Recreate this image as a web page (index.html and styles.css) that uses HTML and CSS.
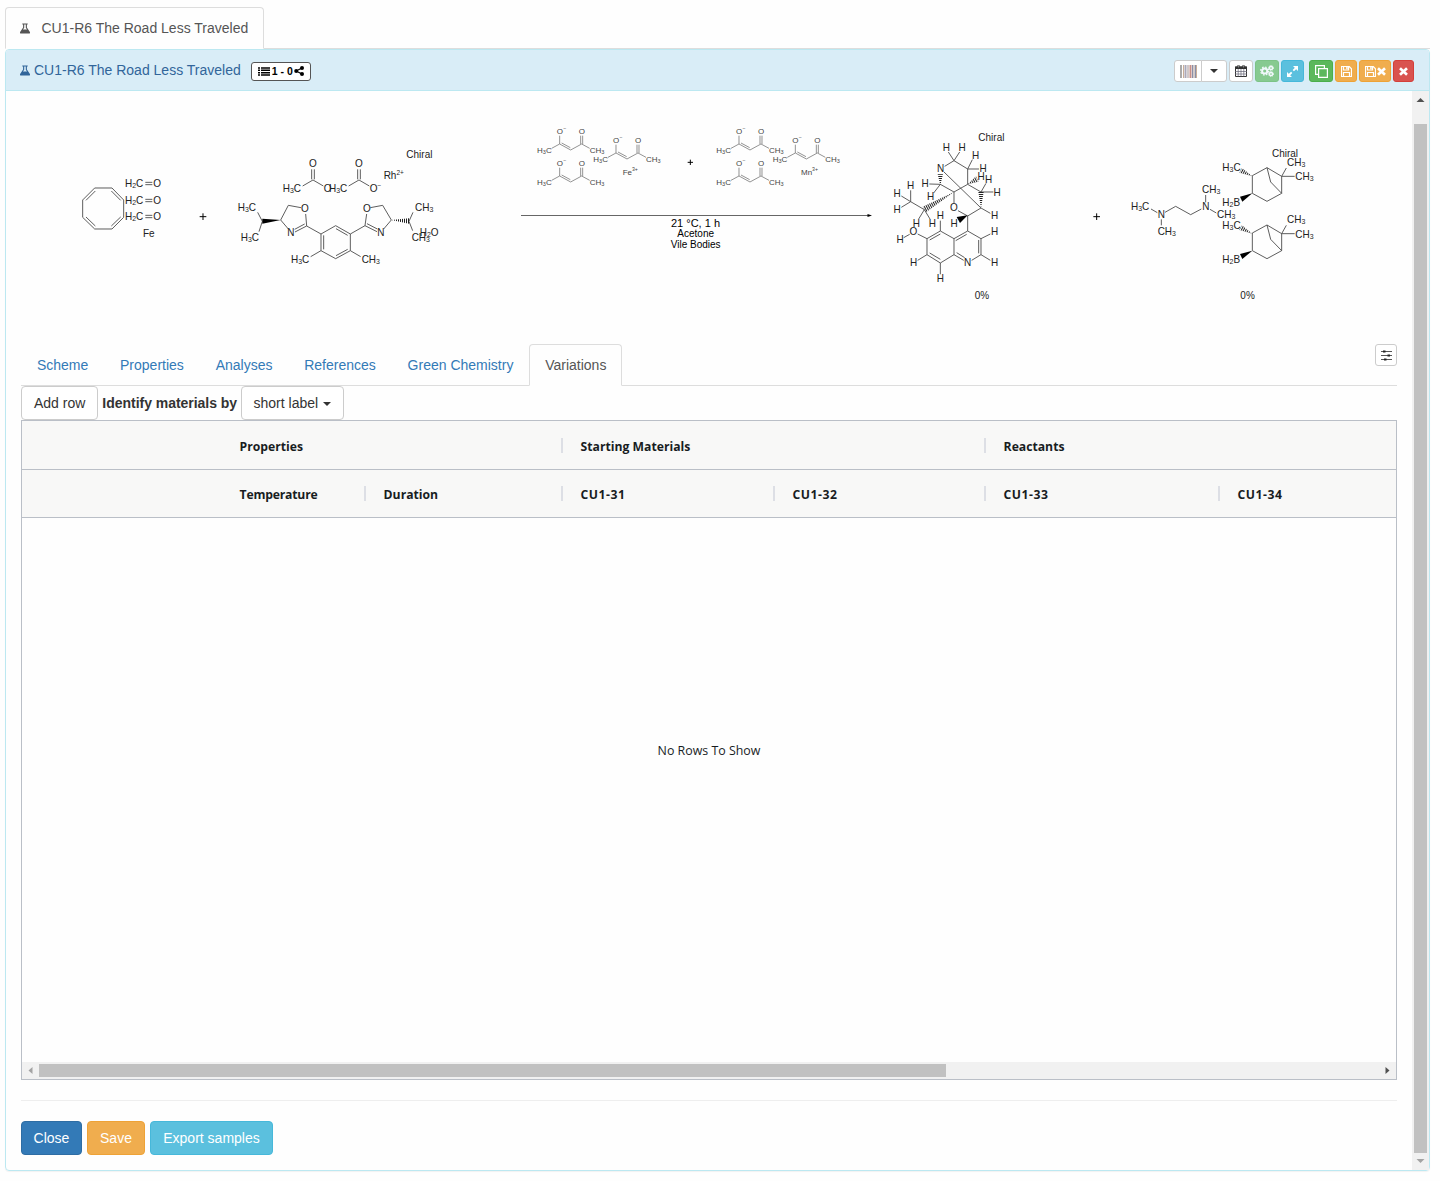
FILE: index.html
```html
<!DOCTYPE html>
<html lang="en">
<head>
<meta charset="utf-8">
<title>CU1-R6 The Road Less Traveled</title>
<link rel="stylesheet" href="styles.css">
</head>
<body>
<svg class="defs" width="0" height="0" aria-hidden="true">
  <defs>
    <symbol id="flask" viewBox="0 0 10 11"><path d="M2.300.500h5.400v1H6.900v3L9.900 9q.5 1.500-.9 1.500H1Q-.4 10.500.1 9L3.100 4.500v-3h-.8zM4.200 1.500v3.300L3 6.500h4L5.800 4.800V1.500z" fill="currentColor" fill-rule="evenodd"/></symbol>
    <symbol id="floppy" viewBox="0 0 11 11"><path d="M.5.500h7.700l2.300 2.300v7.700H.500zM2.500.500v3.500h5V.500M2.500 10.500V6.500h6v4" fill="none" stroke="#fff" stroke-width="1.200"/><path d="M5.200.700h1.500v2.500H5.200z" fill="#fff"/></symbol>
    <symbol id="cross" viewBox="0 0 9 9"><path d="M1 1.300l7 6.400M8 1.300L1 7.700" stroke="#fff" stroke-width="2.700"/></symbol>
    <pattern id="hashV" width="6" height="6" patternUnits="userSpaceOnUse"><path d="M1.500 0v6" stroke="#222" stroke-width="3"/></pattern>
    <pattern id="hashH" width="6" height="6" patternUnits="userSpaceOnUse"><path d="M0 1.500h6" stroke="#222" stroke-width="3"/></pattern>
    <pattern id="hashA" width="6" height="6" patternUnits="userSpaceOnUse" patternTransform="rotate(-28)"><path d="M1.500 0v6" stroke="#222" stroke-width="3"/></pattern>
    <pattern id="hashB" width="6" height="6" patternUnits="userSpaceOnUse" patternTransform="rotate(28)"><path d="M1.500 0v6" stroke="#222" stroke-width="3"/></pattern>
    <g id="acac">
      <path d="M134 62V87L110 100M134 87l33 18 33-18 24 13M140 84l26 14M197 62v25M203 62v25"/>
      <text x="125" y="57">O<tspan class="sup">−</tspan></text><text x="191" y="57">O</text>
      <text x="66" y="115">H<tspan class="sub">3</tspan>C</text><text x="224" y="115">CH<tspan class="sub">3</tspan></text>
    </g>
    <g id="borane">
      <path d="M517 137l44-24 44 26v51l-44 24-44-24zM561 113l11 43 33 34M605 139l14-25M605 139h39"/>
      <path class="solid" d="M517 190l-37 10 7 15z"/><path class="hash" d="M517 139l-31-25-8 14z" fill="url(#hashB)"/>
      <text x="427" y="124">H<tspan class="sub">3</tspan>C</text><text x="621" y="107">CH<tspan class="sub">3</tspan></text>
      <text x="646" y="151">CH<tspan class="sub">3</tspan></text><text x="427" y="227">H<tspan class="sub">2</tspan>B</text>
    </g>
  </defs>
</svg>

<ul class="tabs top-tabs"><li class="tab active"><svg class="flask" width="10" height="11"><use href="#flask"/></svg>CU1-R6 The Road Less Traveled</li></ul>

<section class="panel">
  <header class="panel-header">
    <svg class="flask" width="10" height="11"><use href="#flask"/></svg>
    <span class="title">CU1-R6 The Road Less Traveled</span>
    <span class="badge">
      <svg width="12" height="9" viewBox="0 0 12 9"><path d="M0 .9h2M0 3.300h2M0 5.700h2M0 8.100h2M3 .9h9M3 3.300h9M3 5.700h9M3 8.100h9" stroke="#000" stroke-width="1.500"/></svg>
      <span>1 - 0</span>
      <svg width="10" height="10" viewBox="0 0 10 10"><path d="M8 2L2.200 5 8 8" fill="none" stroke="#000" stroke-width="1.300"/><circle cx="8" cy="2" r="2"/><circle cx="2.200" cy="5" r="2"/><circle cx="8" cy="8" r="2"/></svg>
    </span>
    <div class="tools">
      <div class="split">
        <button class="tool barcode" aria-label="Barcode"><svg width="17" height="13" viewBox="0 0 17 13"><path d="M1 0v13" stroke="#aaa" stroke-width="2"/><path d="M3.500 0v13M16.500 0v13" stroke="#c9ae98"/><path d="M5.500 0v13" stroke="#aba8b8" stroke-width="2"/><path d="M8 0v13M14 0v13" stroke="#a29494"/><path d="M10.500 0v13" stroke="#c58f88" stroke-width="2"/><path d="M12.500 0v13M15.500 0v13" stroke="#898fa8"/></svg></button>
        <button class="tool drop" aria-label="More"><span class="caret"></span></button>
      </div>
      <button class="tool w24" aria-label="Calendar"><svg width="12" height="12" viewBox="0 0 12 12"><path d="M.5 2h11v9.500H.500z" fill="#fff" stroke="#333"/><path d="M0 1.500h12v2.500H0z" fill="#333"/><path d="M3.500 0v3M8.500 0v3" stroke="#333" stroke-width="2"/><path d="M3.500 0v2.500M8.500 0v2.500" stroke="#aaa" stroke-width=".7"/><path d="M3.200 4v7.500M6 4v7.500M8.800 4v7.500M0 6.500h12M0 9h12" stroke="#667" stroke-width=".7"/></svg></button>
      <button class="tool w24 green faded" aria-label="Process"><svg width="14" height="12" viewBox="0 0 14 12"><g fill="none" stroke="#fff"><circle cx="4.700" cy="6" r="2.600" stroke-width="2"/><circle cx="4.700" cy="6" r="4" stroke-width="1.300" stroke-dasharray="1.600 1.540"/><circle cx="11" cy="3" r="1.600" stroke-width="1.500"/><circle cx="11" cy="9" r="1.600" stroke-width="1.500"/><circle cx="11" cy="3" r="2.500" stroke-dasharray="1 1"/><circle cx="11" cy="9" r="2.500" stroke-dasharray="1 1"/></g></svg></button>
      <button class="tool w23 cyan" aria-label="Expand"><svg width="11" height="11" viewBox="0 0 11 11"><path d="M2 9l2.700-2.700M6.300 4.700L9 2" stroke="#fff" stroke-width="1.800"/><path d="M6 0h5v5zM0 6v5h5z" fill="#fff"/></svg></button>
      <button class="tool w24 green copy" aria-label="Copy"><svg width="13" height="13" viewBox="0 0 13 13"><path d="M3.600 3.600h8.800v8.800H3.600zM3 9.400H.600V.600h8.800V3" fill="none" stroke="#fff" stroke-width="1.200"/></svg></button>
      <button class="tool w22 orange" aria-label="Save"><svg width="11" height="11"><use href="#floppy"/></svg></button>
      <button class="tool w32 orange" aria-label="Save and close"><svg width="11" height="11"><use href="#floppy"/></svg><svg width="9" height="9"><use href="#cross"/></svg></button>
      <button class="tool w21 red" aria-label="Close"><svg width="9" height="9"><use href="#cross"/></svg></button>
    </div>
  </header>

  <div class="panel-main">
    <div class="content">
      <svg class="scheme" width="1376" height="238" viewBox="21 91 1376 238">
        <g transform="translate(70 140) scale(.33333)">
          <path d="M38 180l36-36h52l35 36v52l-35 35H74l-36-35zM48 181l28-28M124 153l28 28M48 231l28 27M124 258l28-27M226 127h21M226 134h21M226 178h21M226 185h21M226 226h21M226 233h21"/>
          <text x="165" y="142">H<tspan class="sub">2</tspan>C</text><text x="250" y="142">O</text>
          <text x="165" y="193">H<tspan class="sub">2</tspan>C</text><text x="250" y="193">O</text>
          <text x="165" y="241">H<tspan class="sub">2</tspan>C</text><text x="250" y="241">O</text>
          <text x="219" y="292">Fe</text>
          <path class="plus" d="M389 230h20M399 220v20"/>
        </g>
        <g transform="translate(230 140) scale(.33333)">
          <path d="M218 138l31-18 31 18M245 88v30M253 88v30M356 138l31-18 31 18M383 88v30M391 88v30"/>
          <path d="M83 217l14 27-10 31M152 240l23-44 38 7M227 222l3 36-35 18M224 252l-30 16M175 267l-23-27M230 258l43 24M273 282l44-25 44 25v50l-44 24-44-24zM281 286v42M318 266l35 20M353 328l-35 19M273 332l-31 18M361 332l31 18M361 282l44-25 5-35M405 257l36 18M411 251l31 16M421 203l37-7 26 44-23 27M549 217l-12 27 11 28"/>
          <path class="solid" d="M152 240l-55-4v15z"/><path class="hash" d="M484 240l53-5v16z" fill="url(#hashV)"/>
          <text x="529" y="55">Chiral</text><text x="237" y="82">O</text><text x="375" y="82">O</text>
          <text x="158" y="157">H<tspan class="sub">3</tspan>C</text><text x="281" y="157">O</text><text x="297" y="157">H<tspan class="sub">3</tspan>C</text><text x="419" y="157">O<tspan class="sup">−</tspan></text>
          <text x="461" y="118">Rh<tspan class="sup">2+</tspan></text>
          <text x="23" y="214">H<tspan class="sub">3</tspan>C</text><text x="32" y="304">H<tspan class="sub">3</tspan>C</text>
          <text x="213" y="217">O</text><text x="172" y="289">N</text><text x="399" y="217">O</text><text x="442" y="289">N</text>
          <text x="183" y="370">H<tspan class="sub">3</tspan>C</text><text x="395" y="370">CH<tspan class="sub">3</tspan></text>
          <text x="555" y="214">CH<tspan class="sub">3</tspan></text><text x="545" y="304">CH<tspan class="sub">3</tspan></text><text x="569" y="289">H<tspan class="sub">2</tspan>O</text>
        </g>
        <g class="agents" transform="translate(515 115) scale(.33333)">
          <use href="#acac"/><use href="#acac" y="96"/><use href="#acac" x="169" y="27"/>
          <text x="323" y="181">Fe<tspan class="sup">3+</tspan></text>
          <use href="#acac" x="538"/><use href="#acac" x="538" y="96"/><use href="#acac" x="707" y="27"/>
          <text x="858" y="181">Mn<tspan class="sup">3+</tspan></text>
          <path class="plus" d="M518 142h16M526 134v16"/>
        </g>
        <path class="arrow" d="M521 215.500H869"/><path class="solid" d="M867.500 214l4.500 1.500-4.500 1.500z"/>
        <text class="cond big" x="695.500" y="227">21 °C, 1 h</text><text class="cond" x="695.700" y="237.300">Acetone</text><text class="cond" x="695.700" y="248">Vile Bodies</text>
        <g transform="translate(880 120) scale(.33333)">
          <path d="M194 139l28-17-17-26M222 122l17-26M222 122l41 25 14-28M263 147h34M263 147v46l-41 23-41-23-33-1M181 193l-20 26M263 193l40 23 15-26M303 216h37M303 264l28 16M192 156l111 108-40 24-29-16M222 216v34M263 288v45M133 269l-41-24v-34M92 245l-28-17M92 245l-28 17M133 269l-17 28M133 269l17 28"/>
          <path d="M263 333l40 23v48l-28 17M303 356l28-14M303 404l28 17M251 421l-29-17v-48l41-23M222 356l-41-23-40 23v48l40 25 41-25M181 333v-31M141 356l-28-14M89 343l-18 10M141 404l-28 17M181 429v34M296 360v40M254 413l-24-15M227 362l33-19M181 342l-32 18M149 399l32 19"/>
          <path class="solid" d="M263 286l-33 5 10 18z"/>
          <path class="hash" d="M222 216l-94 44 10 17z" fill="url(#hashA)"/><path class="hash" d="M263 193l25-24 8 16z" fill="url(#hashA)"/>
          <path class="hash" d="M181 195l-8-32h16zM303 264l-8-48h16z" fill="url(#hashH)"/>
          <text x="295" y="64">Chiral</text><text x="284" y="536">0%</text>
          <g class="atom"><text x="199" y="94">H</text><text x="246" y="94">H</text><text x="287" y="117">H</text><text x="309" y="157">H</text><text x="303" y="181">H</text><text x="326" y="188">H</text><text x="135" y="201">H</text><text x="351" y="228">H</text><text x="152" y="241">H</text><text x="92" y="208">H</text><text x="51" y="231">H</text><text x="51" y="279">H</text><text x="109" y="321">H</text><text x="157" y="321">H</text><text x="181" y="298">H</text><text x="222" y="321">H</text><text x="344" y="298">H</text><text x="344" y="346">H</text><text x="60" y="369">H</text><text x="101" y="439">H</text><text x="344" y="439">H</text><text x="181" y="487">H</text><text x="182" y="157">N</text><text x="222" y="274">O</text><text x="100" y="346">O</text><text x="263" y="439">N</text></g>
        </g>
        <g transform="translate(1080 130) scale(.33333)">
          <path class="plus" d="M40 260h20M50 250v20"/>
          <path d="M213 237l19 11M244 268v18M255 247l32-18 45 25 32-17M377 217v-22M390 238l19 11"/>
          <text x="153" y="241">H<tspan class="sub">3</tspan>C</text><text x="233" y="264">N</text><text x="233" y="315">CH<tspan class="sub">3</tspan></text><text x="367" y="241">N</text><text x="366" y="190">CH<tspan class="sub">3</tspan></text><text x="411" y="265">CH<tspan class="sub">3</tspan></text>
          <use href="#borane"/><use href="#borane" y="172"/>
          <text x="576" y="82">Chiral</text><text x="481" y="506">0%</text>
        </g>
      </svg>

      <div class="tab-row">
        <ul class="tabs"><li class="tab">Scheme</li><li class="tab">Properties</li><li class="tab">Analyses</li><li class="tab">References</li><li class="tab">Green Chemistry</li><li class="tab active">Variations</li></ul>
        <button class="tool settings" aria-label="Tab settings"><svg width="11" height="11" viewBox="0 0 11 11"><path d="M0 1.500h11M0 5.500h11M0 9.500h11" stroke="#555"/><path d="M2 .5h2.500v2H2zM6.500 4.500h2.500v2H6.500zM3 8.500h2.500v2H3z" fill="#222"/></svg></button>
      </div>

      <div class="controls"><button class="btn">Add row</button><b>Identify materials by</b><button class="btn picker">short label<span class="caret"></span></button></div>

      <div class="grid">
        <div class="grid-head"><div class="cell c-blank"></div><div class="cell c-props">Properties</div><div class="cell c-start">Starting Materials</div><div class="cell c-last">Reactants</div></div>
        <div class="grid-head second"><div class="cell c-blank"></div><div class="cell c-temp">Temperature</div><div class="cell c-dur">Duration</div><div class="cell code c-m1">CU1-31</div><div class="cell code c-m2">CU1-32</div><div class="cell code c-m3">CU1-33</div><div class="cell code c-last">CU1-34</div></div>
        <div class="grid-body">No Rows To Show</div>
        <div class="hscroll"><svg width="17" height="17"><path d="M10.500 5v7L6.500 8.500z" fill="#a3a3a3"/></svg><div class="hthumb"></div><svg class="right" width="17" height="17"><path d="M6.500 5v7l4-3.500z" fill="#505050"/></svg></div>
      </div>

      <hr>
      <div class="actions"><button class="btn blue">Close</button><button class="btn orange">Save</button><button class="btn cyan">Export samples</button></div>
    </div>
    <div class="vscroll"><svg width="17" height="33"><path d="M4.500 11h8L8.500 7z" fill="#505050"/></svg><div class="vthumb"></div><svg width="17" height="17"><path d="M4.500 6h8l-4 4z" fill="#a3a3a3"/></svg></div>
  </div>
</section>
</body>
</html>
```
FILE: styles.css
```css
* { box-sizing: border-box; }
body { margin: 0; padding: 7px 10px 10px 5px; height: 1181px; background: #fefefe; color: #333; font: 14px/20px "Liberation Sans", Arial, sans-serif; }
.defs { position: absolute; }
button { font: inherit; color: #333; margin: 0; }
svg { flex: none; }

.tabs { display: flex; margin: 0; padding: 0; list-style: none; border-bottom: 1px solid #ddd; }
.tab { height: 42px; margin-bottom: -1px; padding: 10px 14.9px; border: 1px solid transparent; border-radius: 4px 4px 0 0; color: #337ab7; white-space: nowrap; }
.tab.active { color: #555; background: #fefefe; border-color: #ddd #ddd #fefefe; }
.top-tabs { height: 42px; }
.top-tabs .tab { width: 259px; padding: 10px 0 10px 14px; }
.top-tabs .flask { margin-right: 11.5px; vertical-align: -1px; }

.panel { display: flex; flex-direction: column; width: 1425px; height: 1122px; border: 1px solid #bce8f1; border-radius: 4px; box-shadow: 0 1px 1px rgba(0,0,0,.05); }
.panel-header { display: flex; align-items: center; height: 41px; padding: 0 15px 0 14px; background: #d9edf7; border-bottom: 1px solid #bce8f1; border-radius: 3px 3px 0 0; color: #31659a; }
.title { margin-left: 4px; }
.badge { display: flex; align-items: center; gap: 3px; width: 60px; height: 19px; margin: 2px 0 0 10px; padding: 0 0 0 6px; background: #fff; border: 1px solid #555; border-radius: 3px; color: #000; font-size: 10.5px; font-weight: bold; white-space: nowrap; }
.badge span { margin: 0 -1px 0 -1px; }
.badge svg:last-child { margin-left: -1px; }
.tools { display: flex; gap: 2px; margin: 2px 0 0 auto; }
.split { display: flex; }
.tool { display: flex; align-items: center; justify-content: center; gap: 1px; height: 22px; padding: 0; background: #fff; border: 1px solid #ccc; border-radius: 3px; }
.barcode { width: 28px; border-radius: 3px 0 0 3px; }
.drop { width: 26px; margin-left: -1px; border-radius: 0 3px 3px 0; }
.w21 { width: 21px; }
.w22 { width: 22px; }
.w23 { width: 23px; }
.w24 { width: 24px; }
.w32 { width: 32px; }
.copy { margin-left: 3px; }
.caret { display: inline-block; border-top: 4px solid #333; border-left: 4px solid transparent; border-right: 4px solid transparent; vertical-align: middle; }
.green { background: #5cb85c; border-color: #4cae4c; }
.faded { opacity: .65; }
.cyan { background: #5bc0de; border-color: #46b8da; color: #fff; }
.orange { background: #f0ad4e; border-color: #eea236; color: #fff; }
.red { background: #d9534f; border-color: #d43f3a; }
.blue { background: #337ab7; border-color: #2e6da4; color: #fff; }

.panel-main { flex: 1; display: flex; min-height: 0; }
.content { flex: 1; padding: 0 15px; min-width: 0; }
.scheme { display: block; width: 1376px; height: 238px; margin-bottom: 15px; }
.scheme path:not([fill]), #borane path:not([fill]) { fill: none; stroke: #444; stroke-width: 2.6; }
.scheme text, #borane text { font-size: 30px; fill: #222; }
.scheme path.solid, #borane path.solid { fill: #000; stroke: none; }
.scheme path.plus { stroke: #000; stroke-width: 3; }
#acac text, .scheme .agents text { font-size: 24px; fill: #444; }
#acac path { fill: none; stroke: #777; stroke-width: 2.4; }
.scheme path.arrow { stroke: #666; stroke-width: 1; }
.scheme .cond { font-size: 10px; text-anchor: middle; fill: #000; }
.scheme .big { font-size: 11px; }
.sub { font-size: 70%; baseline-shift: -4px; }
.sup { font-size: 65%; baseline-shift: 11px; }
.atom { text-anchor: middle; }

.tab-row { position: relative; height: 42px; }
.tab-row .settings { position: absolute; right: 0; top: 0; width: 22px; }
.controls { display: flex; align-items: center; gap: 4px; height: 34px; }
.controls b { letter-spacing: -.03px; }
.btn { height: 34px; padding: 6px 12px; border: 1px solid #ccc; border-radius: 4px; background: #fff; white-space: nowrap; }
.btn.picker { width: 103px; padding: 6px 0; margin-left: -.3px; }
.btn .caret { margin-left: 5px; }
.btn.blue { width: 61px; padding: 6px 0; background: #337ab7; border-color: #2e6da4; }
.btn.orange { width: 58px; padding: 6px 0; background: #f0ad4e; border-color: #eea236; }
.btn.cyan { width: 123px; padding: 6px 0; background: #5bc0de; border-color: #46b8da; }

.grid { display: flex; flex-direction: column; height: 660px; border: 1px solid #babfc7; font-family: "Open Sans", "Noto Sans", sans-serif; color: #181d1f; }
.grid-head { display: flex; height: 49px; background: #f8f8f7; border-bottom: 1px solid #babfc7; font-size: 12.2px; font-weight: 700; }
.grid-head.second { height: 48px; }
.cell { display: flex; align-items: center; justify-content: space-between; flex: none; padding: 3px 0 0 17.6px; white-space: nowrap; }
.second .cell { padding-top: 2px; }
.cell::after { content: ""; width: 2px; height: 15px; margin-top: -3px; background: #dddfe5; letter-spacing: 0; }
.c-blank::after, .c-last::after { display: none; }
.c-blank { width: 200px; }
.c-props { width: 341px; }
.c-start { width: 423px; }
.c-temp { width: 144px; letter-spacing: -.2px; }
.c-dur { width: 197px; }
.c-m1 { width: 212px; }
.c-m2 { width: 211px; }
.c-m3 { width: 234px; }
.code { letter-spacing: .5px; }
.grid-body { flex: 1; display: flex; align-items: center; justify-content: center; padding-bottom: 79px; font-size: 12.4px; }
.hscroll { display: flex; align-items: center; height: 17px; background: #f1f1f1; }
.hthumb { width: 907px; height: 13px; background: #c1c1c1; }
.hscroll .right { margin-left: auto; }
hr { margin: 20px 0; border: 0; border-top: 1px solid #eee; }
.actions { display: flex; gap: 5px; }
.vscroll { display: flex; flex-direction: column; align-items: center; width: 17px; background: #f1f1f1; }
.vthumb { width: 13px; height: 1029px; background: #c1c1c1; }
```
